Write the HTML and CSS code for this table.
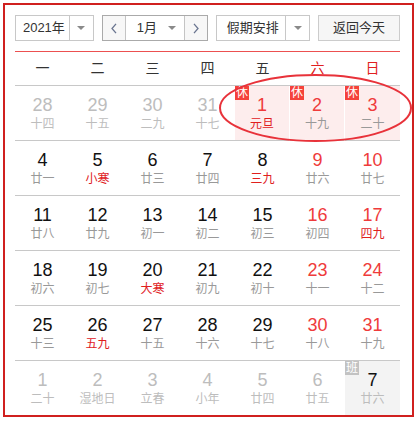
FILE: index.html
```html
<!DOCTYPE html>
<html lang="zh-CN">
<head>
<meta charset="utf-8">
<title>万年历</title>
<link rel="stylesheet" href="styles.css">
</head>
<body>
<div class="frame">
  <div class="toolbar">
    <div class="select year">
      <span class="sel-label">2021年</span>
      <span class="sel-arrow"><i class="tri"></i></span>
    </div>
    <div class="select month">
      <span class="nav"><svg width="6" height="11" viewBox="0 0 6 11"><polyline points="5,0.8 1,5.5 5,10.2" fill="none" stroke="#6a7590" stroke-width="1.3"/></svg></span>
      <span class="month-mid"><span class="month-label">1月</span><i class="tri"></i></span>
      <span class="nav"><svg width="6" height="11" viewBox="0 0 6 11"><polyline points="1,0.8 5,5.5 1,10.2" fill="none" stroke="#6a7590" stroke-width="1.3"/></svg></span>
    </div>
    <div class="select holiday">
      <span class="sel-label">假期安排</span>
      <span class="sel-arrow"><i class="tri"></i></span>
    </div>
    <button class="today">返回今天</button>
  </div>

  <div class="weekdays">
    <span>一</span><span>二</span><span>三</span><span>四</span><span>五</span><span class="wk">六</span><span class="wk">日</span>
  </div>

  <div class="days">
    <div class="cell other"><span class="num">28</span><span class="lunar">十四</span></div>
    <div class="cell other"><span class="num">29</span><span class="lunar">十五</span></div>
    <div class="cell other"><span class="num">30</span><span class="lunar">二九</span></div>
    <div class="cell other"><span class="num">31</span><span class="lunar">十七</span></div>
    <div class="cell hol sep"><span class="badge">休</span><span class="num red">1</span><span class="lunar fest">元旦</span></div>
    <div class="cell hol sep"><span class="badge">休</span><span class="num red">2</span><span class="lunar">十九</span></div>
    <div class="cell hol"><span class="badge">休</span><span class="num red">3</span><span class="lunar">二十</span></div>

    <div class="cell"><span class="num">4</span><span class="lunar">廿一</span></div>
    <div class="cell"><span class="num">5</span><span class="lunar fest">小寒</span></div>
    <div class="cell"><span class="num">6</span><span class="lunar">廿三</span></div>
    <div class="cell"><span class="num">7</span><span class="lunar">廿四</span></div>
    <div class="cell"><span class="num">8</span><span class="lunar fest">三九</span></div>
    <div class="cell"><span class="num red">9</span><span class="lunar">廿六</span></div>
    <div class="cell"><span class="num red">10</span><span class="lunar">廿七</span></div>

    <div class="cell"><span class="num">11</span><span class="lunar">廿八</span></div>
    <div class="cell"><span class="num">12</span><span class="lunar">廿九</span></div>
    <div class="cell"><span class="num">13</span><span class="lunar">初一</span></div>
    <div class="cell"><span class="num">14</span><span class="lunar">初二</span></div>
    <div class="cell"><span class="num">15</span><span class="lunar">初三</span></div>
    <div class="cell"><span class="num red">16</span><span class="lunar">初四</span></div>
    <div class="cell"><span class="num red">17</span><span class="lunar fest">四九</span></div>

    <div class="cell"><span class="num">18</span><span class="lunar">初六</span></div>
    <div class="cell"><span class="num">19</span><span class="lunar">初七</span></div>
    <div class="cell"><span class="num">20</span><span class="lunar fest">大寒</span></div>
    <div class="cell"><span class="num">21</span><span class="lunar">初九</span></div>
    <div class="cell"><span class="num">22</span><span class="lunar">初十</span></div>
    <div class="cell"><span class="num red">23</span><span class="lunar">十一</span></div>
    <div class="cell"><span class="num red">24</span><span class="lunar">十二</span></div>

    <div class="cell"><span class="num">25</span><span class="lunar">十三</span></div>
    <div class="cell"><span class="num">26</span><span class="lunar fest">五九</span></div>
    <div class="cell"><span class="num">27</span><span class="lunar">十五</span></div>
    <div class="cell"><span class="num">28</span><span class="lunar">十六</span></div>
    <div class="cell"><span class="num">29</span><span class="lunar">十七</span></div>
    <div class="cell"><span class="num red">30</span><span class="lunar">十八</span></div>
    <div class="cell"><span class="num red">31</span><span class="lunar">十九</span></div>

    <div class="cell other last"><span class="num">1</span><span class="lunar">二十</span></div>
    <div class="cell other last"><span class="num">2</span><span class="lunar">湿地日</span></div>
    <div class="cell other last"><span class="num">3</span><span class="lunar">立春</span></div>
    <div class="cell other last"><span class="num">4</span><span class="lunar">小年</span></div>
    <div class="cell other last"><span class="num">5</span><span class="lunar">廿四</span></div>
    <div class="cell other last"><span class="num">6</span><span class="lunar">廿五</span></div>
    <div class="cell other last work"><span class="badge grey">班</span><span class="num dark">7</span><span class="lunar">廿六</span></div>
  </div>

  <svg class="mark" width="200" height="72" viewBox="0 0 200 72"><ellipse cx="99.5" cy="36" rx="95.5" ry="33" fill="none" stroke="#e8323a" stroke-width="2"/></svg>
</div>
</body>
</html>
```

FILE: styles.css
```css
html, body {
  margin: 0;
  padding: 0;
  background: #fff;
}
body {
  font-family: "Liberation Sans", "Noto Sans CJK SC", sans-serif;
  color: #333;
}
.frame {
  position: relative;
  box-sizing: border-box;
  width: 411px;
  height: 414px;
  margin: 3px;
  border: 2px solid #d0201f;
  padding: 10px 0 0 10px;
  overflow: visible;
}
.toolbar {
  display: flex;
  width: 385px;
  height: 26px;
  gap: 8px;
}
.select {
  box-sizing: border-box;
  display: flex;
  height: 26px;
  border: 1px solid #c8c8c8;
  background: #fff;
  font-size: 13px;
  line-height: 24px;
  color: #333;
}
.year { width: 79px; }
.holiday { width: 94px; }
.sel-label {
  flex: 1;
  text-align: center;
  padding-left: 3px;
}
.sel-arrow {
  width: 23px;
  border-left: 1px solid #c8c8c8;
  display: flex;
  align-items: center;
  justify-content: center;
}
.tri {
  display: block;
  width: 0;
  height: 0;
  border-left: 4px solid transparent;
  border-right: 4px solid transparent;
  border-top: 4px solid #8a8a8a;
}
.month {
  width: 107px;
  border-color: #aaa;
}
.nav {
  width: 22px;
  display: flex;
  align-items: center;
  justify-content: center;
  background: #f7f7f7;
}
.month-mid {
  flex: 1;
  display: flex;
  align-items: center;
  border-left: 1px solid #c4c4c4;
  border-right: 1px solid #c4c4c4;
  padding-left: 11px;
  padding-right: 8px;
  justify-content: space-between;
}
.today {
  box-sizing: border-box;
  width: 82px;
  height: 26px;
  margin-left: 0;
  border: 1px solid #ccc;
  background: #f6f6f6;
  font-family: "Liberation Sans", "Noto Sans CJK SC", sans-serif;
  font-size: 13px;
  color: #333;
  padding: 0;
  line-height: 24px;
}
.weekdays {
  margin-top: 10px;
  width: 385px;
  display: grid;
  grid-template-columns: repeat(7, 55px);
  height: 33px;
  border-top: 1px solid #ec5050;
  border-bottom: 1px solid #c8c8c8;
  font-size: 14px;
  line-height: 33px;
  text-align: center;
  color: #333;
}
.weekdays .wk { color: #e02020; }
.days {
  width: 385px;
  display: grid;
  grid-template-columns: repeat(7, 55px);
  grid-auto-rows: 55px;
}
.cell {
  position: relative;
  box-sizing: border-box;
  border-bottom: 1px solid #c8c8c8;
  display: flex;
  flex-direction: column;
  align-items: center;
  padding-top: 9px;
}
.cell.last {
  border-bottom: none;
  height: 54px;
}
.num {
  font-size: 18px;
  line-height: 20px;
  color: #111;
}
.lunar {
  font-size: 12px;
  line-height: 18px;
  color: #999;
}
.num.red { color: #ef3b3b; }
.lunar.fest { color: #e0201e; }
.other .num { color: #bdbdbd; }
.other .lunar { color: #bdbdbd; }
.other .num.dark { color: #111; }
.hol { background: #fdeded; }
.hol.sep { border-right: 1px solid #fff; }
.work { background: #f3f3f3; }
.badge {
  position: absolute;
  left: 0;
  top: 0;
  width: 14px;
  height: 14px;
  background: #f5423a;
  color: #fff;
  font-size: 12px;
  line-height: 14px;
  text-align: center;
}
.badge.grey { background: #c2c2c2; }
.mark {
  position: absolute;
  left: 211px;
  top: 67px;
  overflow: visible;
}
```
